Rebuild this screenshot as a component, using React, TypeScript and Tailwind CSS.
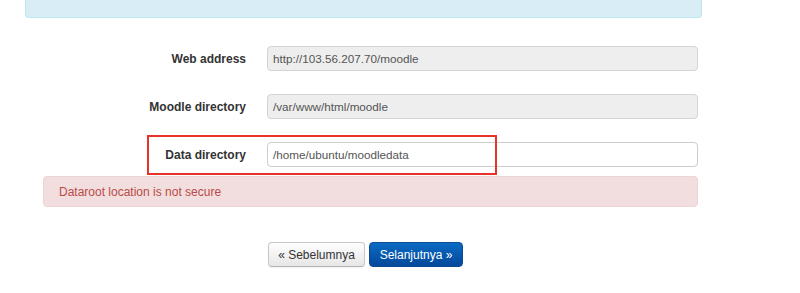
import React from 'react';

const fields = [
  { label: 'Web address', value: 'http://103.56.207.70/moodle', disabled: true },
  { label: 'Moodle directory', value: '/var/www/html/moodle', disabled: true },
  { label: 'Data directory', value: '/home/ubuntu/moodledata', disabled: false, marked: true },
];

const App: React.FC = () => {
  return (
    <div className="w-[800px] h-[293px] bg-white overflow-hidden text-[12px] text-[#333] font-['Liberation_Sans',Helvetica,Arial,sans-serif]">
      {/* Info box, cut off at the top */}
      <div className="ml-[25px] w-[677px] h-[18px] bg-[#d9edf7] border-x border-b border-[#bce8f1] rounded-b-[4px]" />

      <div className="ml-[43px] w-[655px] mt-[28px]">
        {fields.map((f) => (
          <div key={f.label} className={`relative flex items-center ${f.marked ? 'mb-[9px]' : 'mb-[23px]'}`}>
            <label className="w-[203px] text-right font-bold">{f.label}</label>
            <div
              className={`ml-[21px] w-[431px] h-[25px] flex items-center px-[5px] border rounded-[4px] text-[11.7px] text-[#555] ${
                f.disabled ? 'bg-[#eeeeee] border-[#d4d4d4]' : 'bg-white border-[#cccccc]'
              }`}
            >
              {f.value}
            </div>
            {f.marked && (
              <div className="absolute left-[104px] top-[-7px] w-[350px] h-[40px] border-2 border-[#e8322a] pointer-events-none" />
            )}
          </div>
        ))}

        <div className="h-[31px] flex items-center pl-[15px] bg-[#f2dede] border border-[#eed3d7] rounded-[4px] text-[#b94a48]">
          Dataroot location is not secure
        </div>

        <div className="flex gap-[4px] ml-[225px] mt-[35px]">
          <button className="w-[97px] h-[25px] border border-[#c8c8c8] border-b-[#b3b3b3] rounded-[4px] bg-gradient-to-b from-white to-[#e6e6e6] text-[#333] shadow-[0_1px_2px_rgba(0,0,0,0.05)]">
            « Sebelumnya
          </button>
          <button className="w-[94px] h-[25px] border border-[#0a4a92] rounded-[4px] bg-gradient-to-b from-[#0b6bc3] to-[#04489b] text-white">
            Selanjutnya »
          </button>
        </div>
      </div>
    </div>
  );
};

export default App;
